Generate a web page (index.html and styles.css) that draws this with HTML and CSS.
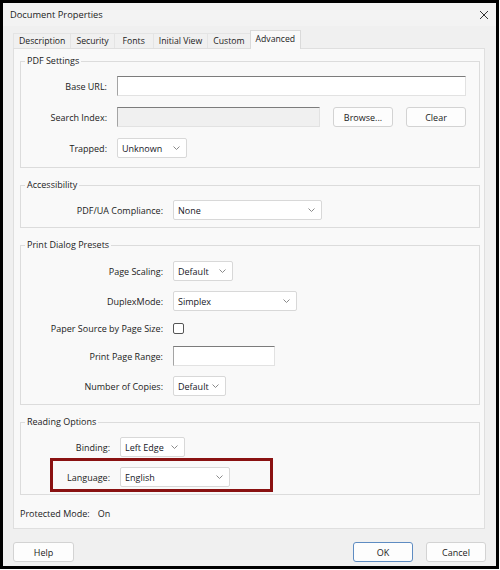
FILE: index.html
```html
<!DOCTYPE html>
<html lang="en">
<head>
    <meta charset="UTF-8">
    <title>Document Properties</title>
    <link rel="stylesheet" href="styles.css">
</head>
<body>
    <div class="dialog">
        <div class="titlebar">
            <span class="title">Document Properties</span>
            <svg class="close" width="10" height="10" viewBox="0 0 10 10">
                <path d="M1 1 L9 9 M9 1 L1 9" stroke="#333" stroke-width="1" fill="none"/>
            </svg>
        </div>

        <div class="tabs">
            <span class="tab">Description</span>
            <span class="tab">Security</span>
            <span class="tab tab-wide">Fonts</span>
            <span class="tab">Initial View</span>
            <span class="tab">Custom</span>
            <span class="tab tab-active">Advanced</span>
        </div>

        <div class="panel">
            <!-- PDF 设置 -->
            <fieldset class="group group-pdf">
                <legend>PDF Settings</legend>
                <div class="rows">
                    <div class="row">
                        <label class="lbl">Base URL:</label>
                        <div class="input input-url"></div>
                    </div>
                    <div class="row">
                        <label class="lbl">Search Index:</label>
                        <div class="input input-index"></div>
                        <button class="btn btn-browse">Browse...</button>
                        <button class="btn btn-clear">Clear</button>
                    </div>
                    <div class="row">
                        <label class="lbl">Trapped:</label>
                        <div class="select w-trapped">
                            <span>Unknown</span>
                            <svg class="chev" width="7" height="4" viewBox="0 0 7 4"><path d="M0.5 0.5 L3.5 3.5 L6.5 0.5" stroke="#8a8a8a" fill="none"/></svg>
                        </div>
                    </div>
                </div>
            </fieldset>

            <fieldset class="group group-access">
                <legend>Accessibility</legend>
                <div class="rows">
                    <div class="row">
                        <label class="lbl">PDF/UA Compliance:</label>
                        <div class="select w-pdfua">
                            <span>None</span>
                            <svg class="chev" width="7" height="4" viewBox="0 0 7 4"><path d="M0.5 0.5 L3.5 3.5 L6.5 0.5" stroke="#8a8a8a" fill="none"/></svg>
                        </div>
                    </div>
                </div>
            </fieldset>

            <fieldset class="group group-print">
                <legend>Print Dialog Presets</legend>
                <div class="rows">
                    <div class="row">
                        <label class="lbl">Page Scaling:</label>
                        <div class="select w-scaling">
                            <span>Default</span>
                            <svg class="chev" width="7" height="4" viewBox="0 0 7 4"><path d="M0.5 0.5 L3.5 3.5 L6.5 0.5" stroke="#8a8a8a" fill="none"/></svg>
                        </div>
                    </div>
                    <div class="row">
                        <label class="lbl">DuplexMode:</label>
                        <div class="select w-duplex">
                            <span>Simplex</span>
                            <svg class="chev" width="7" height="4" viewBox="0 0 7 4"><path d="M0.5 0.5 L3.5 3.5 L6.5 0.5" stroke="#8a8a8a" fill="none"/></svg>
                        </div>
                    </div>
                    <div class="row row-check">
                        <label class="lbl">Paper Source by Page Size:</label>
                        <span class="checkbox"></span>
                    </div>
                    <div class="row">
                        <label class="lbl">Print Page Range:</label>
                        <div class="input input-range"></div>
                    </div>
                    <div class="row">
                        <label class="lbl">Number of Copies:</label>
                        <div class="select w-copies">
                            <span>Default</span>
                            <svg class="chev" width="7" height="4" viewBox="0 0 7 4"><path d="M0.5 0.5 L3.5 3.5 L6.5 0.5" stroke="#8a8a8a" fill="none"/></svg>
                        </div>
                    </div>
                </div>
            </fieldset>

            <fieldset class="group group-reading">
                <legend>Reading Options</legend>
                <div class="rows">
                    <div class="row">
                        <label class="lbl">Binding:</label>
                        <div class="select w-binding">
                            <span>Left Edge</span>
                            <svg class="chev" width="7" height="4" viewBox="0 0 7 4"><path d="M0.5 0.5 L3.5 3.5 L6.5 0.5" stroke="#8a8a8a" fill="none"/></svg>
                        </div>
                    </div>
                    <div class="row row-lang">
                        <label class="lbl">Language:</label>
                        <div class="select w-lang">
                            <span>English</span>
                            <svg class="chev" width="7" height="4" viewBox="0 0 7 4"><path d="M0.5 0.5 L3.5 3.5 L6.5 0.5" stroke="#8a8a8a" fill="none"/></svg>
                        </div>
                        <span class="highlight"></span>
                    </div>
                </div>
            </fieldset>

            <div class="protected">
                <span>Protected Mode:</span>
                <span>On</span>
            </div>
        </div>

        <div class="footer">
            <button class="btn btn-help">Help</button>
            <button class="btn btn-ok">OK</button>
            <button class="btn">Cancel</button>
        </div>
    </div>
</body>
</html>
```

FILE: styles.css
```css
/* 重置默认样式 */
* {
    margin: 0;
    padding: 0;
    box-sizing: border-box;
}

body {
    background: #fff;
    font-family: "Open Sans", "Noto Sans", sans-serif;
    font-size: 9px;
    color: #1b1b1b;
}

/* 对话框外框 */
.dialog {
    width: 499px;
    height: 569px;
    border: 3px solid #000;
    background: #f0f0f0;
}

.titlebar {
    height: 23px;
    background: #f3f3f3;
    display: flex;
    justify-content: space-between;
    align-items: center;
    padding: 0 7px 0 7px;
}

.title {
    font-size: 9.3px;
}

/* 选项卡 */
.tabs {
    height: 22px;
    display: flex;
    align-items: flex-end;
    padding-left: 10px;
}

.tab {
    height: 15px;
    line-height: 14px;
    padding: 0 5px;
    font-size: 8.7px;
    border: 1px solid #e4e4e4;
    border-bottom: none;
    margin-right: -1px;
    text-align: center;
}

.tab-wide {
    min-width: 40px;
}

.tab-active {
    height: 19px;
    line-height: 16px;
    background: #f9f9f9;
    border-color: #dadada;
    margin-bottom: -1px;
    position: relative;
    z-index: 1;
}

.panel {
    height: 481px;
    margin: 0 11px 0 10px;
    border: 1px solid #dfdfdf;
    background: #f9f9f9;
    padding: 6px 4px 0 6px;
}

/* 分组框 */
.group {
    border: 1px solid #dcdcdc;
    margin-bottom: 11px;
    padding: 9px 0 9px 0;
}

.group legend {
    line-height: 12px;
    padding: 0 2px;
    margin-left: 4px;
}

.rows {
    display: flex;
    flex-direction: column;
    gap: 10px;
}

.row {
    display: flex;
    align-items: center;
    height: 20px;
}

.lbl {
    text-align: right;
    margin-right: 10px;
    flex-shrink: 0;
}

.group-pdf .rows { gap: 11px; }
.group-pdf .lbl { width: 86px; }
.group-access { padding-bottom: 7px; }
.group-access .lbl,
.group-print .lbl { width: 142px; }
.group-print { padding: 10px 0 8px 0; }
.group-reading { padding-bottom: 7px; }
.group-reading .lbl { width: 89px; }

.row-check {
    height: 15px;
}

/* 输入框 */
.input {
    height: 20px;
    background: #fff;
    border: 1px solid #e2e2e2;
    border-top-color: #7c7c7c;
    border-left-color: #a4a4a4;
}

.input-url { width: 349px; }
.input-index { width: 203px; background: #f0f0f0; }
.input-range { width: 102px; }

/* 下拉框 */
.select {
    height: 20px;
    display: flex;
    align-items: center;
    justify-content: space-between;
    background: #fff;
    border: 1px solid #d8d8d8;
    border-radius: 2px;
    padding: 0 6px 0 4px;
    color: #161626;
}

.w-trapped { width: 70px; }
.w-pdfua { width: 149px; }
.w-scaling { width: 60px; }
.w-duplex { width: 124px; }
.w-copies { width: 53px; }
.w-binding { width: 65px; }
.w-lang { width: 110px; }

.checkbox {
    width: 11px;
    height: 11px;
    border: 1px solid #555;
    border-radius: 2px;
    background: #fff;
}

.row-lang {
    position: relative;
}

/* 红色标注框 */
.highlight {
    position: absolute;
    left: 29px;
    top: -9px;
    width: 223px;
    height: 34px;
    border: 3px solid #8a1212;
}

.protected {
    display: flex;
    gap: 8px;
    line-height: 12px;
    margin-top: 13px;
}

/* 按钮 */
.btn {
    height: 20px;
    width: 60px;
    font-family: inherit;
    font-size: 9px;
    color: #1b1b1b;
    background: #fdfdfd;
    border: 1px solid #d3d3d3;
    border-radius: 3px;
}

.btn-browse { margin-left: 13px; }
.btn-clear { margin-left: 13px; }

.footer {
    display: flex;
    gap: 13px;
    padding: 0 10px;
    margin-top: 13px;
}

.btn-help {
    width: 61px;
    margin-right: auto;
}

.btn-ok {
    border-color: #5e8cc2;
}
```
